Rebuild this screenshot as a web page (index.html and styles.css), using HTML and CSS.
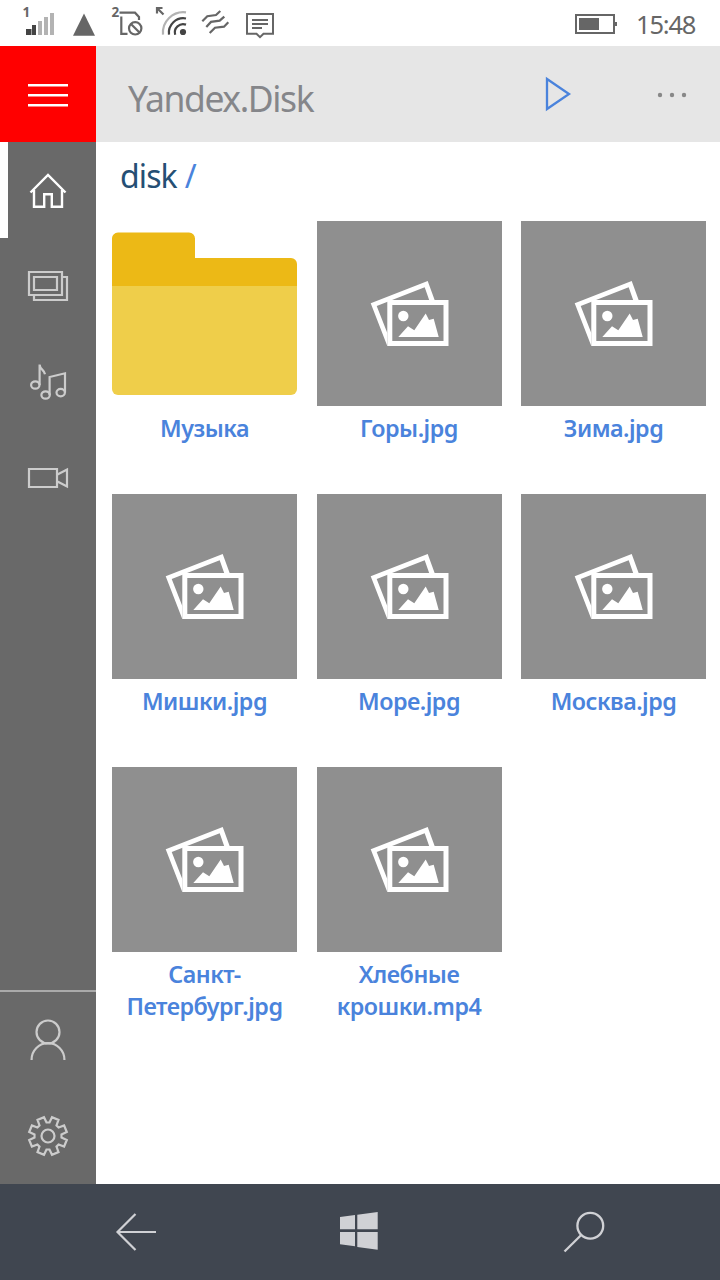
FILE: index.html
```html
<!DOCTYPE html>
<html lang="ru">
<head>
<meta charset="utf-8">
<title>Yandex.Disk</title>
<link rel="stylesheet" href="styles.css">
</head>
<body>
<svg class="defs" width="0" height="0">
  <symbol id="photo" viewBox="0 0 185 185">
    <path fill="#fff" fill-rule="evenodd" d="M53.7 82.3L110.7 60L118 80H112.5L107.7 66.3L59.7 85L70.3 112V125Z"/>
    <path fill="none" stroke="#fff" stroke-width="5" d="M72.8 81.5H129V122.5H72.8Z"/>
    <circle fill="#fff" cx="86.3" cy="95" r="5.2"/>
    <path fill="#fff" d="M81.3 116L91 105.3L97.3 109.3L108.7 92.5L112 99L116.7 97.7L121.7 116Z"/>
  </symbol>
</svg>
<div class="phone">
  <header class="status">
    <svg class="status-icons" viewBox="0 0 290 46" width="290" height="46">
      <g fill="#666" class="sim-number"><text x="22.5" y="17">1</text><text x="111.5" y="17">2</text></g>
      <path fill="#444" d="M26 29h5.5v6H26zM32 25h4v10h-4z"/>
      <path fill="#b3b3b3" d="M38 21h4v14h-4zM44 17h4v18h-4zM50 13h4v22h-4z"/>
      <path fill="#666" d="M73 35.7L84 13.5L95 35.7Z"/>
      <g fill="none" stroke="#666" stroke-width="2.2">
        <path d="M119.5 12.7H135L139 17V20M121.3 16.5V33.8H127.5"/>
        <circle cx="135.2" cy="28.3" r="6.2"/><path d="M131 24L139.5 32.6"/>
        <path d="M157 13.5V8H162.5M157 8L163.5 14.5"/>
        <path stroke="#b3b3b3" d="M163 34.7A20.5 20.5 0 0 1 186 12.3"/>
        <path stroke="#444" d="M169 34.7A14.5 14.5 0 0 1 186 18.5M175.2 34.7A8.3 8.3 0 0 1 186 24.6"/>
        <path d="M202.3 21.3L207.3 16.2L216 15L220.3 11M206.3 26.9L211 21.9L219.7 20.7L224.3 16.7M209.7 33L215 27.7L224 26.7L228.3 22.3"/>
        <path stroke-width="2" d="M247 14H273V33.7H263.5L260 37.2L256.500 33.7H247ZM252 20H268M252 24H268M252 28H262"/>
      </g>
      <circle fill="#444" cx="183" cy="32" r="3.1"/>
    </svg>
    <div class="status-right">
      <svg width="43" height="22" viewBox="0 0 43 22">
        <path fill="none" stroke="#666" stroke-width="2" d="M1 2H39V20H1Z"/>
        <path fill="#666" d="M4 5H24V17H4ZM40 9H42V13H40Z"/>
      </svg>
      <span class="clock">15:48</span>
    </div>
  </header>

  <div class="appbar">
    <button class="menu" aria-label="Menu">
      <svg viewBox="0 0 96 96" width="96" height="96"><path fill="#fff" d="M28 38H68V40.5H28ZM28 48H68V50.5H28ZM28 58H68V60.5H28Z"/></svg>
    </button>
    <h1 class="title">Yandex.Disk</h1>
    <svg class="actions" viewBox="530 0 190 96" width="190" height="96">
      <path fill="none" stroke="#4a83dc" stroke-width="2.3" d="M547 33V63L569 48Z"/>
      <g fill="#888"><circle cx="660" cy="49" r="2.2"/><circle cx="672" cy="49" r="2.2"/><circle cx="684" cy="49" r="2.2"/></g>
    </svg>
  </div>

  <div class="body">
    <nav class="side">
      <a class="side-item active"><svg viewBox="0 0 96 96"><path d="M30.5 50.5L48 33L65.500 50.5M34 48V64.7H44.2V52.2H51.8V64.7H62V48"/></svg></a>
      <a class="side-item"><svg viewBox="0 0 96 96"><path d="M29 34H62V57H29ZM34 39H57V52H34ZM34 58V62H67V39H63"/></svg></a>
      <a class="side-item"><svg viewBox="0 0 96 96"><ellipse cx="35.3" cy="51" rx="4.2" ry="3.7"/><path d="M39.6 51V30.5C40 36 44 35 45 40.3M49.6 61V43L65 39.3V58.5"/><ellipse cx="45.6" cy="61" rx="4.2" ry="3.7"/><ellipse cx="60.7" cy="58.6" rx="4.2" ry="3.7"/></svg></a>
      <a class="side-item"><svg viewBox="0 0 96 96"><path d="M29 39H57V57H29ZM57.500 44.5L67 39.5V56.5L57.5 51.5"/></svg></a>
      <div class="side-foot">
        <a class="side-item"><svg viewBox="0 0 96 96"><circle cx="48" cy="40" r="11.5"/><path d="M31.6 68V67.5A16.4 16.4 0 0 1 64.4 67.5V68"/></svg></a>
        <a class="side-item"><svg viewBox="0 0 96 96"><g transform="translate(48 48)"><circle r="6.5"/><path d="M-4 -18.8L-1.5 -13.5H1.5L4 -18.8L10.5 -16.1L8.5 -10.6L10.6 -8.5L16.1 -10.5L18.8 -4L13.5 -1.5V1.5L18.8 4L16.1 10.5L10.6 8.5L8.5 10.6L10.5 16.1L4 18.8L1.5 13.5H-1.5L-4 18.8L-10.5 16.1L-8.5 10.6L-10.6 8.5L-16.1 10.5L-18.8 4L-13.5 1.5V-1.5L-18.8 -4L-16.1 -10.5L-10.6 -8.5L-8.5 -10.6L-10.5 -16.1Z"/></g></svg></a>
      </div>
    </nav>

    <main class="content">
      <div class="crumbs"><span class="crumb">disk</span><span class="slash">/</span></div>
      <div class="grid">
        <figure class="tile folder">
          <svg viewBox="0 0 185 185">
            <path fill="#ecb916" d="M0 18A6 6 0 0 1 6 11.5H77A6 6 0 0 1 83 17.5V37H179A6 6 0 0 1 185 43V66H0Z"/>
            <path fill="#efce4a" d="M0 65H185V168A6 6 0 0 1 179 174H6A6 6 0 0 1 0 168Z"/>
          </svg>
          <figcaption>Музыка</figcaption>
        </figure>
        <figure class="tile"><svg><use href="#photo"/></svg><figcaption>Горы.jpg</figcaption></figure>
        <figure class="tile"><svg><use href="#photo"/></svg><figcaption>Зима.jpg</figcaption></figure>
        <figure class="tile"><svg><use href="#photo"/></svg><figcaption>Мишки.jpg</figcaption></figure>
        <figure class="tile"><svg><use href="#photo"/></svg><figcaption>Море.jpg</figcaption></figure>
        <figure class="tile"><svg><use href="#photo"/></svg><figcaption>Москва.jpg</figcaption></figure>
        <figure class="tile"><svg><use href="#photo"/></svg><figcaption>Санкт-<br>Петербург.jpg</figcaption></figure>
        <figure class="tile"><svg><use href="#photo"/></svg><figcaption>Хлебные<br>крошки.mp4</figcaption></figure>
      </div>
    </main>
  </div>

  <footer class="softkeys">
    <svg viewBox="0 0 96 96"><path fill="none" stroke="#d0d1d5" stroke-width="2.2" d="M68 48H29.5M47.5 30L29.5 48L47.5 66"/></svg>
    <svg viewBox="0 0 96 96"><path fill="#d0d1d5" d="M28 33L43 31V45.3H28ZM45.3 30.7L65.7 28V45.3H45.3ZM28 48H43V62.3L28 60.3ZM45.3 48H65.7V65.7L45.3 63Z"/></svg>
    <svg viewBox="0 0 96 96"><g fill="none" stroke="#d0d1d5" stroke-width="2.300"><circle cx="54.3" cy="41.8" r="12.9"/><path d="M45.2 51L28.5 67.5"/></g></svg>
  </footer>
</div>
</body>
</html>
```
FILE: styles.css
```css
* { box-sizing: border-box; }
body { margin: 0; background: #fff; font-family: "Noto Sans", "Open Sans", sans-serif; }
svg { display: block; }
.defs { position: absolute; }
.phone { width: 720px; height: 1280px; display: flex; flex-direction: column; overflow: hidden; }

.status { height: 46px; display: flex; justify-content: space-between; }
.sim-number { font-size: 13.5px; font-weight: 700; }
.status-right { display: flex; align-items: center; gap: 18px; padding: 2px 25px 0 0; }
.clock { width: 59px; font-size: 25.5px; line-height: 40px; color: #666; letter-spacing: -1.2px; }

.appbar { height: 96px; display: flex; background: #e6e6e6; }
.menu { width: 96px; height: 96px; padding: 0; border: 0; background: #f00; }
.title { margin: 0; padding: 4px 0 0 32px; flex: 1; font-size: 35.5px; font-weight: 400; line-height: 96px; color: #85868a; letter-spacing: -1.4px; }

.body { flex: 1; display: flex; }
.side { width: 96px; display: flex; flex-direction: column; background: #696969; }
.side-item { display: block; height: 96px; }
.side-item svg { width: 96px; height: 96px; fill: none; stroke: #ccc; stroke-width: 2.2; }
.side-item.active { box-shadow: inset 8px 0 #fff; }
.side-item.active svg { stroke: #fff; stroke-width: 2.4; }
.side-foot { margin-top: auto; border-top: 2px solid #aaa; }

.content { flex: 1; padding: 0 14px 0 16px; }
.crumbs { height: 79px; padding: 12px 0 0 8px; display: flex; gap: 8px; font-size: 32px; line-height: 44px; }
.crumb { color: #254f74; letter-spacing: -0.9px; }
.slash { color: #4a83dc; }
.grid { display: grid; grid-template-columns: repeat(3, 185px); justify-content: space-between; grid-auto-rows: 273px; }
.tile { margin: 0; }
.tile svg { width: 185px; height: 185px; background: #8f8f8f; }
.tile.folder svg { background: none; }
.tile figcaption { padding-top: 6px; font-size: 23.3px; font-weight: 600; line-height: 32px; text-align: center; color: #4a83dc; letter-spacing: -0.5px; }

.softkeys { height: 96px; padding: 0 24px; display: flex; background: #404650; }
.softkeys svg { flex: 1; height: 96px; }
```
